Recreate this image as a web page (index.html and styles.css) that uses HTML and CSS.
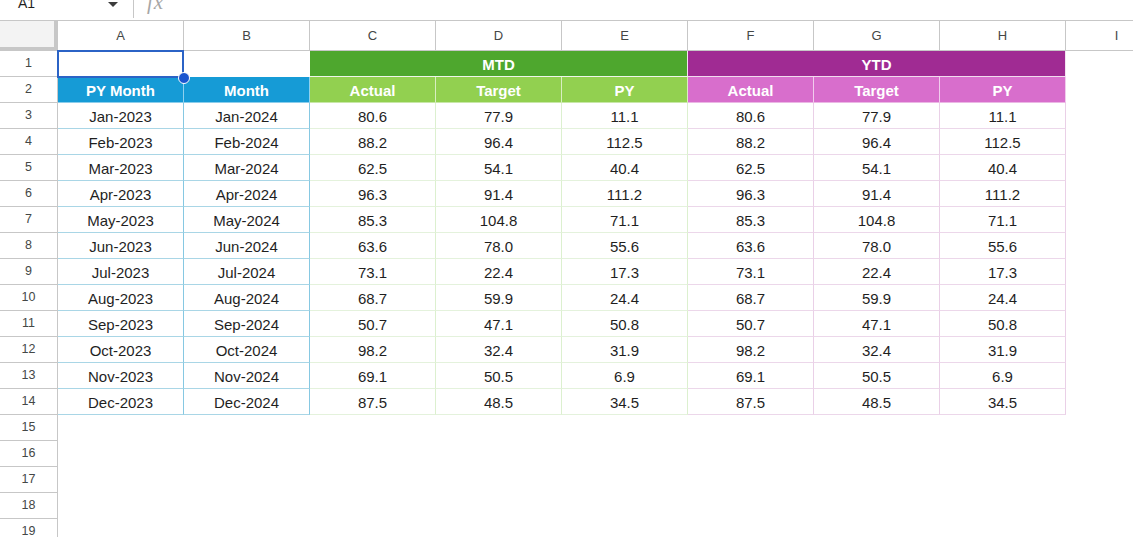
FILE: index.html
```html
<!DOCTYPE html>
<html lang="en">
<head>
<meta charset="utf-8">
<title>Sheet</title>
<link rel="stylesheet" href="styles.css">
</head>
<body>
<div class="formula-bar">
  <div class="fb-inner">
    <span class="ref">A1</span>
    <span class="caret"></span>
    <span class="sep"></span>
    <span class="fx">fx</span>
  </div>
</div>
<div class="sheet">
  <div class="row colhead">
    <div class="corner"></div>
    <div class="ch">A</div><div class="ch">B</div><div class="ch">C</div><div class="ch">D</div>
    <div class="ch">E</div><div class="ch">F</div><div class="ch">G</div><div class="ch">H</div>
    <div class="ch">I</div>
  </div>
  <div class="row">
    <div class="rh">1</div>
    <div class="cell sel"><span class="handle"></span></div>
    <div class="cell"></div>
    <div class="cell group mtd">MTD</div>
    <div class="cell group ytd">YTD</div>
  </div>
  <div class="row">
    <div class="rh">2</div>
    <div class="cell hd blue">PY Month</div>
    <div class="cell hd blue">Month</div>
    <div class="cell hd lg">Actual</div>
    <div class="cell hd lg">Target</div>
    <div class="cell hd lg">PY</div>
    <div class="cell hd pk">Actual</div>
    <div class="cell hd pk">Target</div>
    <div class="cell hd pk">PY</div>
  </div>
  <div class="row"><div class="rh">3</div><div class="cell b">Jan-2023</div><div class="cell b">Jan-2024</div><div class="cell g">80.6</div><div class="cell g">77.9</div><div class="cell g">11.1</div><div class="cell p">80.6</div><div class="cell p">77.9</div><div class="cell p">11.1</div></div>
  <div class="row"><div class="rh">4</div><div class="cell b">Feb-2023</div><div class="cell b">Feb-2024</div><div class="cell g">88.2</div><div class="cell g">96.4</div><div class="cell g">112.5</div><div class="cell p">88.2</div><div class="cell p">96.4</div><div class="cell p">112.5</div></div>
  <div class="row"><div class="rh">5</div><div class="cell b">Mar-2023</div><div class="cell b">Mar-2024</div><div class="cell g">62.5</div><div class="cell g">54.1</div><div class="cell g">40.4</div><div class="cell p">62.5</div><div class="cell p">54.1</div><div class="cell p">40.4</div></div>
  <div class="row"><div class="rh">6</div><div class="cell b">Apr-2023</div><div class="cell b">Apr-2024</div><div class="cell g">96.3</div><div class="cell g">91.4</div><div class="cell g">111.2</div><div class="cell p">96.3</div><div class="cell p">91.4</div><div class="cell p">111.2</div></div>
  <div class="row"><div class="rh">7</div><div class="cell b">May-2023</div><div class="cell b">May-2024</div><div class="cell g">85.3</div><div class="cell g">104.8</div><div class="cell g">71.1</div><div class="cell p">85.3</div><div class="cell p">104.8</div><div class="cell p">71.1</div></div>
  <div class="row"><div class="rh">8</div><div class="cell b">Jun-2023</div><div class="cell b">Jun-2024</div><div class="cell g">63.6</div><div class="cell g">78.0</div><div class="cell g">55.6</div><div class="cell p">63.6</div><div class="cell p">78.0</div><div class="cell p">55.6</div></div>
  <div class="row"><div class="rh">9</div><div class="cell b">Jul-2023</div><div class="cell b">Jul-2024</div><div class="cell g">73.1</div><div class="cell g">22.4</div><div class="cell g">17.3</div><div class="cell p">73.1</div><div class="cell p">22.4</div><div class="cell p">17.3</div></div>
  <div class="row"><div class="rh">10</div><div class="cell b">Aug-2023</div><div class="cell b">Aug-2024</div><div class="cell g">68.7</div><div class="cell g">59.9</div><div class="cell g">24.4</div><div class="cell p">68.7</div><div class="cell p">59.9</div><div class="cell p">24.4</div></div>
  <div class="row"><div class="rh">11</div><div class="cell b">Sep-2023</div><div class="cell b">Sep-2024</div><div class="cell g">50.7</div><div class="cell g">47.1</div><div class="cell g">50.8</div><div class="cell p">50.7</div><div class="cell p">47.1</div><div class="cell p">50.8</div></div>
  <div class="row"><div class="rh">12</div><div class="cell b">Oct-2023</div><div class="cell b">Oct-2024</div><div class="cell g">98.2</div><div class="cell g">32.4</div><div class="cell g">31.9</div><div class="cell p">98.2</div><div class="cell p">32.4</div><div class="cell p">31.9</div></div>
  <div class="row"><div class="rh">13</div><div class="cell b">Nov-2023</div><div class="cell b">Nov-2024</div><div class="cell g">69.1</div><div class="cell g">50.5</div><div class="cell g">6.9</div><div class="cell p">69.1</div><div class="cell p">50.5</div><div class="cell p">6.9</div></div>
  <div class="row"><div class="rh">14</div><div class="cell b">Dec-2023</div><div class="cell b">Dec-2024</div><div class="cell g">87.5</div><div class="cell g">48.5</div><div class="cell g">34.5</div><div class="cell p">87.5</div><div class="cell p">48.5</div><div class="cell p">34.5</div></div>
  <div class="row"><div class="rh">15</div></div>
  <div class="row"><div class="rh">16</div></div>
  <div class="row"><div class="rh">17</div></div>
  <div class="row"><div class="rh">18</div></div>
  <div class="row"><div class="rh">19</div></div>
</div>
</body>
</html>
```

FILE: styles.css
```css
* { box-sizing: border-box; }

html, body {
  margin: 0;
  padding: 0;
  background: #ffffff;
  overflow: hidden;
}

body {
  font-family: "Liberation Sans", Arial, sans-serif;
  color: #1f1f1f;
  width: 1133px;
  height: 537px;
}

/* ---------- formula bar ---------- */
.formula-bar {
  height: 21px;
  border-bottom: 1px solid #c7c7c7;
  overflow: hidden;
}

.fb-inner {
  display: flex;
  align-items: center;
  height: 24px;
  margin-top: -9px;
  padding-left: 18px;
}

.ref {
  font-size: 14px;
  color: #1f1f1f;
  width: 90px;
}

.caret {
  width: 0;
  height: 0;
  border-left: 5px solid transparent;
  border-right: 5px solid transparent;
  border-top: 5px solid #3c3c3c;
  margin-top: 2px;
}

.sep {
  width: 1px;
  height: 22px;
  margin-top: 8px;
  background: #c7c7c7;
  margin-left: 15px;
}

.fx {
  margin-left: 13px;
  font-family: "Liberation Serif", "Times New Roman", serif;
  font-style: italic;
  font-size: 21px;
  letter-spacing: 1px;
  color: #a6a6a6;
  margin-top: -2px;
}

/* ---------- sheet ---------- */
.sheet {
  display: flex;
  flex-direction: column;
}

.row {
  display: grid;
  grid-template-columns: 58px repeat(8, 126px) 102px;
  height: 26px;
}

.row.colhead {
  height: 30px;
}

.corner {
  background: #f3f3f3;
  border-right: 4px solid #c7c7c7;
  border-bottom: 4px solid #c7c7c7;
}

.ch {
  display: flex;
  align-items: center;
  justify-content: center;
  font-size: 13px;
  color: #444746;
  border-right: 1px solid #c7c7c7;
  border-bottom: 1px solid #c7c7c7;
}

.rh {
  display: flex;
  align-items: center;
  justify-content: center;
  font-size: 12.5px;
  color: #444746;
  padding-bottom: 2px;
  border-right: 1px solid #c7c7c7;
  border-bottom: 1px solid #c7c7c7;
}

.cell {
  display: flex;
  align-items: center;
  justify-content: center;
  font-size: 15px;
  color: #1f1f1f;
  padding-top: 1px;
}

/* selection */
.sel {
  position: relative;
}

.sel::after {
  content: "";
  position: absolute;
  left: -1px;
  top: -1px;
  right: 0;
  bottom: -1px;
  border: 2px solid #2b63c6;
}

.handle {
  position: absolute;
  right: -6px;
  bottom: -7px;
  width: 12px;
  height: 12px;
  border-radius: 50%;
  background: #1b55cf;
  border: 1px solid #ffffff;
  z-index: 2;
}

/* group header row */
.group {
  grid-column: span 3;
  color: #ffffff;
  font-weight: bold;
  border-right: 1px solid #f3e3f1;
  border-bottom: 1px solid #eef6ea;
}

.mtd { background: #4ea72e; }
.ytd { background: #a02b93; border-bottom-color: #f1dcee; }

/* column header row */
.hd {
  color: #ffffff;
  font-weight: bold;
  border-right: 1px solid rgba(255, 255, 255, 0.65);
  border-bottom: 1px solid rgba(255, 255, 255, 0.5);
}

.hd.blue { background: #169bd6; border-right-color: #8fd0ee; }
.hd.lg   { background: #92d050; }
.hd.pk   { background: #d86ecc; }

/* data cells */
.b {
  border-right: 1px solid #86c8e2;
  border-bottom: 1px solid #a9d6e6;
}

.g {
  border-right: 1px solid #dcf0cf;
  border-bottom: 1px solid #e4f2dc;
}

.p {
  border-right: 1px solid #ead0e7;
  border-bottom: 1px solid #ecd7ea;
}
```
